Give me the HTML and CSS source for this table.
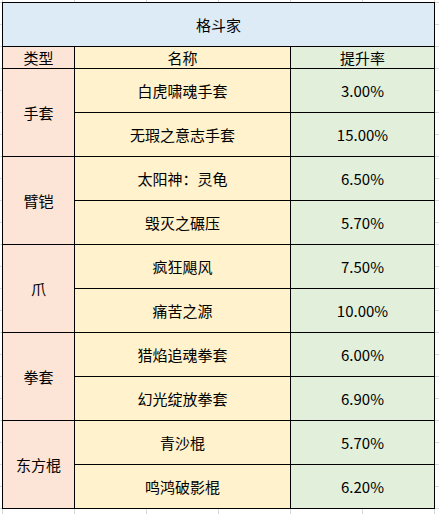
FILE: index.html
```html
<!DOCTYPE html>
<html lang="zh-CN">
<head>
<meta charset="utf-8">
<title>格斗家</title>
<link rel="stylesheet" href="styles.css">
</head>
<body>
<div class="sheet">
  <div class="cell title">格斗家</div>
  <div class="cell type">类型</div>
  <div class="cell name">名称</div>
  <div class="cell rate">提升率</div>

  <div class="cell type span2">手套</div>
  <div class="cell name">白虎啸魂手套</div>
  <div class="cell rate">3.00%</div>
  <div class="cell name">无瑕之意志手套</div>
  <div class="cell rate">15.00%</div>

  <div class="cell type span2">臂铠</div>
  <div class="cell name">太阳神：灵龟</div>
  <div class="cell rate">6.50%</div>
  <div class="cell name">毁灭之碾压</div>
  <div class="cell rate">5.70%</div>

  <div class="cell type span2">爪</div>
  <div class="cell name">疯狂飓风</div>
  <div class="cell rate">7.50%</div>
  <div class="cell name">痛苦之源</div>
  <div class="cell rate">10.00%</div>

  <div class="cell type span2">拳套</div>
  <div class="cell name">猎焰追魂拳套</div>
  <div class="cell rate">6.00%</div>
  <div class="cell name">幻光绽放拳套</div>
  <div class="cell rate">6.90%</div>

  <div class="cell type span2">东方棍</div>
  <div class="cell name">青沙棍</div>
  <div class="cell rate">5.70%</div>
  <div class="cell name">鸣鸿破影棍</div>
  <div class="cell rate">6.20%</div>
</div>
</body>
</html>
```
FILE: styles.css
```css
html, body {
  margin: 0;
  padding: 0;
}
body {
  width: 439px;
  height: 514px;
  overflow: hidden;
  background-color: #ffffff;
  background-image:
    linear-gradient(to right, #d9d9d9 1px, transparent 1px),
    linear-gradient(to bottom, #d9d9d9 1px, transparent 1px);
  background-size: 72px 22px;
  background-position: 2px 2px;
  padding: 2px 0 0 2px;
  box-sizing: border-box;
  font-family: "Noto Sans CJK SC", "Noto Sans", sans-serif;
  font-size: 15px;
  color: #000;
}
.sheet {
  display: grid;
  grid-template-columns: 71px 215px 143px;
  grid-template-rows: 43px 21px repeat(10, 43px);
  gap: 1px;
  padding: 1px;
  background: #000;
  width: max-content;
}
.cell {
  display: flex;
  align-items: center;
  justify-content: center;
  line-height: 1;
  white-space: nowrap;
}
.title {
  grid-column: 1 / 4;
  background: #ddebf7;
}
.type {
  background: #fce4d6;
}
.span2 {
  grid-row: span 2;
}
.name {
  background: #fff2cc;
}
.rate {
  background: #e2efda;
}
```
